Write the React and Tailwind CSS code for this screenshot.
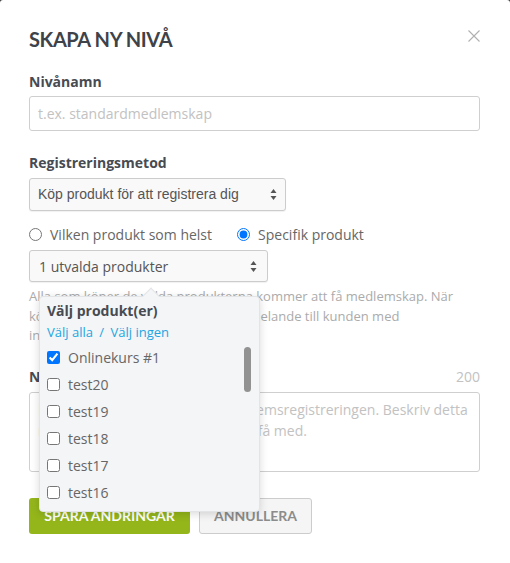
import React from "react";

// Small up/down caret pair used by the select boxes
const Carets = () => (
  <svg width="7" height="13" viewBox="0 0 7 13" className="shrink-0">
    <path d="M0.5 5 L3.5 1 L6.5 5 Z" fill="#555" />
    <path d="M0.5 8 L3.5 12 L6.5 8 Z" fill="#555" />
  </svg>
);

const products = [
  { name: "Onlinekurs #1", checked: true },
  { name: "test20" },
  { name: "test19" },
  { name: "test18" },
  { name: "test17" },
  { name: "test16" },
  { name: "test15" },
  { name: "test14" },
];

export default function App() {
  return (
    <div className="min-h-[563px] bg-[#3a3a3a]">
      <div className="min-h-[563px] rounded-t-[3px] bg-white pl-[29px] pr-[30px] pt-[27px] pb-[29px] font-['Open_Sans',sans-serif]">
        {/* Header */}
        <div className="flex items-start justify-between">
          <h2 className="font-['Lato',sans-serif] text-[20px] font-bold leading-[24px] tracking-[-0.4px] text-[#3e4249]">
            SKAPA NY NIVÅ
          </h2>
          <svg className="mt-[3px]" width="12" height="12" viewBox="0 0 12 12">
            <path d="M0.5 0.5 L11.5 11.5 M11.5 0.5 L0.5 11.5" stroke="#b0b0b0" strokeWidth="1.1" />
          </svg>
        </div>

        {/* Level name */}
        <div className="mt-[21px] text-[14px] font-bold leading-[20px] text-[#474b52]">Nivånamn</div>
        <div className="mt-[4px] flex h-[35px] items-center rounded-[3px] border border-[#cfcfcf] px-[8px] text-[14px] text-[#c2c2c2]">
          t.ex. standardmedlemskap
        </div>

        {/* Registration method */}
        <div className="mt-[22px] text-[14px] font-bold leading-[20px] text-[#474b52]">Registreringsmetod</div>
        <div className="mt-[5px] flex h-[33px] w-[257px] items-center justify-between rounded-[3px] border border-[#cccccc] bg-[#f9f9f9] pl-[8px] pr-[8px] font-['Liberation_Sans',sans-serif] text-[14px] text-[#555] shadow-[0_1px_1px_rgba(0,0,0,0.06)]">
          <span>Köp produkt för att registrera dig</span>
          <Carets />
        </div>

        {/* Product scope */}
        <div className="mt-[13px] flex h-[20px] items-center text-[14px] text-[#666]">
          <label className="flex items-center gap-[8px]">
            <input type="radio" name="scope" readOnly className="m-0 h-[13px] w-[13px]" />
            <span>Vilken produkt som helst</span>
          </label>
          <label className="ml-[25px] flex items-center gap-[8px]">
            <input type="radio" name="scope" readOnly checked className="m-0 h-[13px] w-[13px]" />
            <span>Specifik produkt</span>
          </label>
        </div>

        <div className="relative mt-[6px]">
          <div className="flex h-[32px] w-[239px] items-center justify-between rounded-[3px] border border-[#cccccc] bg-[#f9f9f9] pl-[9px] pr-[10px] text-[14px] text-[#555] shadow-[0_1px_1px_rgba(0,0,0,0.06)]">
            <span>1 utvalda produkter</span>
            <Carets />
          </div>

          {/* Product picker popover */}
          <div className="absolute left-[10px] top-[46px] z-10 h-[216px] w-[221px] rounded-[4px] border border-[#e3e4e6] bg-[#f4f5f7] shadow-[0_2px_8px_rgba(0,0,0,0.15)]">
            <div className="absolute left-[105px] top-[-7px] h-[12px] w-[12px] rotate-45 border-l border-t border-[#e3e4e6] bg-[#f4f5f7]" />
            <div className="relative h-full overflow-hidden rounded-[4px] pl-[7px] pt-[4px]">
              <div className="text-[14px] font-bold leading-[20px] text-[#474b52]">Välj produkt(er)</div>
              <div className="mt-[1px] text-[13px] leading-[20px] text-[#1ba6e2]">
                Välj alla <span className="mx-[3px]">/</span> Välj ingen
              </div>
              <div className="mt-[2px]">
                {products.map((p) => (
                  <div key={p.name} className="flex h-[27px] items-center gap-[8px] text-[14px] text-[#666]">
                    <input type="checkbox" readOnly checked={!!p.checked} className="m-0 h-[13px] w-[13px]" />
                    <span>{p.name}</span>
                  </div>
                ))}
              </div>
              <div className="absolute right-[8px] top-[50px] h-[45px] w-[7px] rounded-full bg-[#929292]" />
            </div>
          </div>
        </div>

        <p className="mt-[5px] text-[13px] leading-[19.5px] text-[#ababab]">
          Alla som köper de valda produkterna kommer att få medlemskap. När köpet gjorts skickas ett välkomstmeddelande till kunden med inloggningsuppgifter.
        </p>

        {/* Description */}
        <div className="mt-[21px] flex items-center justify-between text-[14px] leading-[20px]">
          <span className="font-bold text-[#474b52]">Nivåbeskrivning</span>
          <span className="text-[#c2c2c2]">200</span>
        </div>
        <div className="mt-[5px] h-[80px] rounded-[3px] border border-[#cfcfcf] px-[8px] pt-[6px] text-[14px] leading-[21px] text-[#c2c2c2]">
          Detta visas för kunden efter medlemsregistreringen. Beskriv detta medlemskap och vad kunder kan få med.
        </div>

        {/* Actions */}
        <div className="mt-[26px] flex gap-[9px] font-['Lato',sans-serif] text-[14px] font-bold">
          <button className="h-[36px] w-[161px] rounded-[3px] bg-[#94b61b] text-white">SPARA ÄNDRINGAR</button>
          <button className="h-[36px] w-[113px] rounded-[3px] border border-[#cccccc] bg-[#f5f5f5] text-[#8c8c8c]">ANNULLERA</button>
        </div>
      </div>
    </div>
  );
}
